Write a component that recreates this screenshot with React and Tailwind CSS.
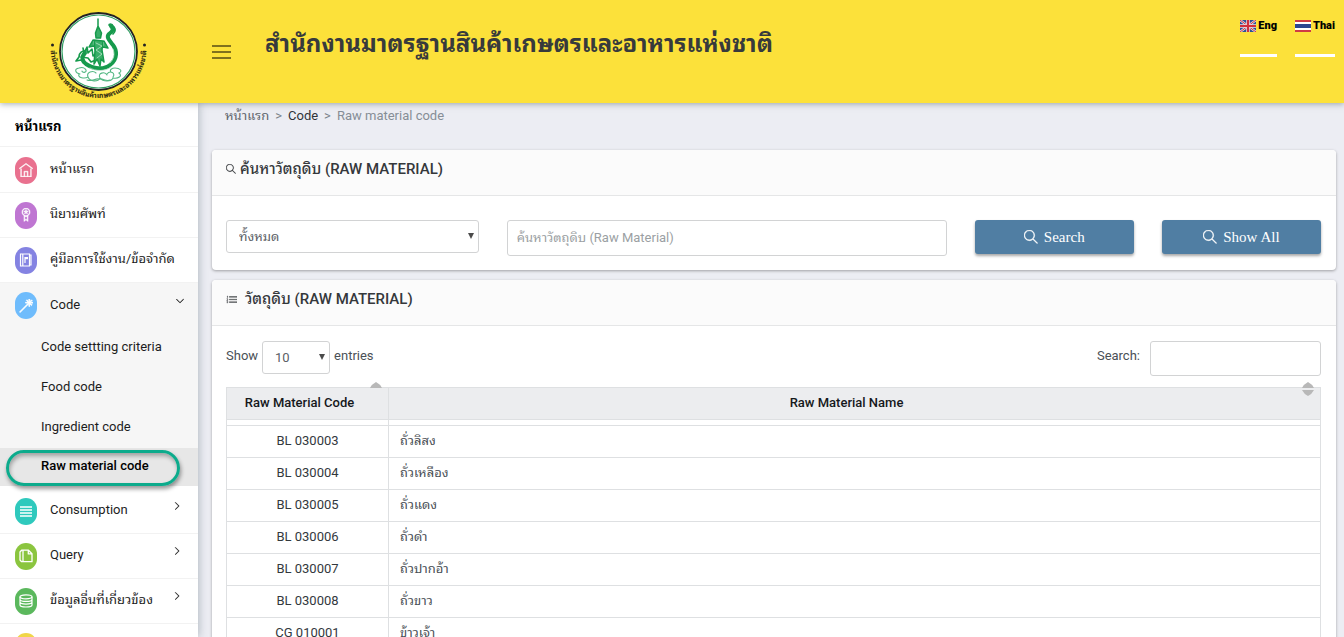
import React from "react";
import {
  TfiHome,
  TfiMedall,
  TfiWand,
  TfiAngleDown,
  TfiAngleRight,
  TfiSearch,
  TfiListOl,
} from "react-icons/tfi";

function DatabaseIcon() {
  return (
    <svg viewBox="0 0 14 14" className="size-[14px]" fill="none" stroke="currentColor" strokeWidth="1.2">
      <ellipse cx="7" cy="2.8" rx="6" ry="2" />
      <path d="M1 2.8v2.6c0 1.1 2.7 2 6 2s6-.9 6-2V2.8M1 5.4v2.7c0 1.1 2.7 2 6 2s6-.9 6-2V5.4M1 8.1v2.9c0 1.1 2.7 2 6 2s6-.9 6-2V8.1" />
    </svg>
  );
}

function LinesIcon() {
  return (
    <svg viewBox="0 0 14 14" className="size-[14px]" fill="none" stroke="currentColor" strokeWidth="1.6">
      <path d="M1 3h12M1 6h12M1 9h12M1 12h12" />
    </svg>
  );
}

function BookIcon() {
  return (
    <svg viewBox="0 0 14 14" className="size-[14px]" fill="none" stroke="currentColor" strokeWidth="1.2">
      <path d="M1.500 1h9v12h-9zM3.800 1v12M10.500 2h1.500v10h-1.500" />
      <path d="M6 4h3v2.200H6z" fill="currentColor" stroke="none" />
      <path d="M6 4v6" />
    </svg>
  );
}

function DocumentsIcon() {
  return (
    <svg viewBox="0 0 14 14" className="size-[14px]" fill="none" stroke="currentColor" strokeWidth="1.3">
      <path d="M4 1.200h5.500l3.500 3.500v8H4zM9.300 1.200v3.700H13M4 1.200H2.600L1 3v8l1.600 1.700H4" strokeLinejoin="round" />
    </svg>
  );
}

function Logo() {
  return (
    <svg viewBox="0 0 108 98" className="h-[98px] w-[108px]" role="img" aria-label="ตราสำนักงาน">
      <circle cx="53.5" cy="46.500" r="38.500" fill="#fff" stroke="#222" strokeWidth="1.800" />
      <circle cx="53.500" cy="46.500" r="36.500" fill="none" stroke="#2f9e62" strokeWidth="1.200" />
      <g fill="none" stroke="#169a4c" strokeLinecap="round" strokeLinejoin="round">
        <path d="M40 48c-4 4-3 8 1 11 7 5 18 6 24 1 8-6 7-15 3-20-4-5-7-8-4-11 4-3 5-5 2-8" strokeWidth="4" />
        <path d="M68 21c-1-3-4-2-4-1M69 22c2 3 1 5-1 7M42 46c-5-1-8 2-8 6l-3 4 5-1 4 3" strokeWidth="1.700" />
        <path d="M38 43l1 5 3-6 1 6 4-4 1 7 5-3M36 52l7 1 3 4 5-2" strokeWidth="1.600" />
        <path d="M53 14v9M50.500 28l2.500-7 3.500 7-1 5h-4.500zM49 35l9 1-1 9 2 12-3-3-1 7-3-7-3 5 1-13zM48 35l-4 7 5-1M59 36l4 7-5-1" strokeWidth="1.500" fill="#3aae69" />
        <path d="M51 38l6 3-6 4 6 4-5 4M45 63c5 3 15 4 21-1M68 44c2 5 1 10-3 14" stroke="#b9e4c9" strokeWidth=".8" />
      </g>
      <g fill="none" stroke="#54b883" strokeWidth="1.100" strokeLinecap="round">
        <path d="M35 69c-5-1-6-5-1-6 3-1 6 0 7 2 1 3-4 3-4 1M34 69c-2 4 6 5 9 3 2 5 10 5 12 1 3 4 11 4 13 0 5 1 10-2 6-5 4-2 1-5-4-5-3 0-6 2-4 4M43 72c-2-5 5-7 8-4M55 73c-3-5 5-7 7-3M68 72c3-4-3-7-6-3" />
        <path d="M42 75c5 2 8-2 12-1 4-1 7 3 11 1" />
      </g>
      <defs>
        <path id="seal-arc" d="M5.500 43A48 50 0 0 0 101.500 43" />
      </defs>
      <circle cx="7.500" cy="40" r="1.500" fill="#222" />
      <circle cx="99.500" cy="40" r="1.500" fill="#222" />
      <text fontSize="7" fontWeight="700" fill="#2b2710">
        <textPath href="#seal-arc" startOffset="50%" textAnchor="middle">
          สำนักงานมาตรฐานสินค้าเกษตรและอาหารแห่งชาติ
        </textPath>
      </text>
    </svg>
  );
}

function UkFlag() {
  return (
    <svg viewBox="0 0 16 12" className="h-3 w-4">
      <path fill="#2f4f93" d="M0 0h16v12H0z" />
      <path d="M0 0l16 12M16 0L0 12" stroke="#e3dfe6" strokeWidth="2.200" />
      <path d="M0 0l16 12M16 0L0 12" stroke="#d0303c" strokeWidth="1" />
      <path d="M8 0v12M0 6h16" stroke="#eee4e8" strokeWidth="3.600" />
      <path d="M8 0v12M0 6h16" stroke="#d0303c" strokeWidth="2.200" />
    </svg>
  );
}

function ThaiFlag() {
  return (
    <svg viewBox="0 0 16 12" className="h-3 w-4">
      <path fill="#cf3b45" d="M0 0h16v12H0z" />
      <path fill="#fff" d="M0 2h16v8H0z" />
      <path fill="#2b4590" d="M0 4h16v4H0z" />
    </svg>
  );
}

function LangLink({ flag, label }) {
  return (
    <a href="#" className="flex flex-col gap-[22px] text-[11px] leading-3 font-black text-black">
      <span className="flex items-center gap-[2px]">
        {flag}
        {label}
      </span>
      <span className="h-[3px] bg-white" />
    </a>
  );
}

function NavItem({ color, icon, label, arrow, open }) {
  return (
    <li className={open ? "" : "border-b border-[#f2f2f2]"}>
      <a href="#" className={`flex items-center pr-[14px] pl-[15px] text-[#1d1d1d] ${open ? "h-[45px]" : "h-11"}`}>
        <span className={`flex h-[27px] w-[22px] shrink-0 items-center justify-center rounded-full text-white ${color}`}>
          {icon}
        </span>
        <span className="ml-[13px] flex-1 pb-[2px] whitespace-nowrap">{label}</span>
        {arrow && <span className={`mb-[10px] text-[8px] ${open ? "" : "mr-[3px]"}`}>{arrow}</span>}
      </a>
    </li>
  );
}

const subItems = ["Code settting criteria", "Food code", "Ingredient code"];

const rows = [
  ["BL 030003", "ถั่วลิสง"],
  ["BL 030004", "ถั่วเหลือง"],
  ["BL 030005", "ถั่วแดง"],
  ["BL 030006", "ถั่วดำ"],
  ["BL 030007", "ถั่วปากอ้า"],
  ["BL 030008", "ถั่วขาว"],
  ["CG 010001", "ข้าวเจ้า"],
];

function Sidebar() {
  return (
    <nav className="z-10 w-[198px] shrink-0 bg-white shadow-[1px_0_8px_rgba(69,90,100,0.35)]">
      <h2 className="flex h-11 items-center border-b border-[#f2f2f2] pt-1 pl-[15px] text-[13px] font-bold text-black">หน้าแรก</h2>
      <ul className="pt-px">
        <NavItem color="bg-[#e9718f]" icon={<TfiHome className="size-[14px] stroke-current stroke-[0.5]" />} label="หน้าแรก" />
        <NavItem color="bg-[#bf76d2]" icon={<TfiMedall className="size-[14px] stroke-current stroke-[0.5]" />} label="นิยามศัพท์" />
        <NavItem color="bg-[#8483e2]" icon={<BookIcon />} label="คู่มือการใช้งาน/ข้อจำกัด" />
        <li className="mb-[3px] bg-[#f6f6f6]">
          <ul>
            <NavItem
              open
              color="bg-[#6fbcfc]"
              icon={<TfiWand className="size-[14px] stroke-current stroke-1" />}
              label="Code"
              arrow={<TfiAngleDown className="stroke-current stroke-1" />}
            />
            {subItems.map((item) => (
              <li key={item}>
                <a href="#" className="flex h-10 items-center pb-[2px] pl-[41px] text-[#1d1d1d]">{item}</a>
              </li>
            ))}
            <li className="relative bg-[#e7e7e7]">
              <a href="#" className="flex h-[38px] items-center pb-[2px] pl-[41px] font-medium text-black">Raw material code</a>
              <span className="absolute inset-y-0 right-[18px] left-[6px] mt-[2px] rounded-full border-3 border-[#0dab8c] shadow-[1px_3px_4px_rgba(0,0,0,0.4),inset_1px_3px_4px_rgba(0,0,0,0.3)]" />
            </li>
          </ul>
        </li>
        <NavItem color="bg-[#2fc9bd]" icon={<LinesIcon />} label="Consumption" arrow={<TfiAngleRight className="stroke-current stroke-1" />} />
        <NavItem color="bg-[#8bc53f]" icon={<DocumentsIcon />} label="Query" arrow={<TfiAngleRight className="stroke-current stroke-1" />} />
        <NavItem color="bg-[#5bb85d]" icon={<DatabaseIcon />} label="ข้อมูลอื่นที่เกี่ยวข้อง" arrow={<TfiAngleRight className="stroke-current stroke-1" />} />
        <NavItem color="bg-[#f0d648]" label="" />
      </ul>
    </nav>
  );
}

function Card({ title, icon, children, className }) {
  return (
    <section className={`rounded bg-white shadow-[0_1px_3px_rgba(43,43,43,0.4)] ${className}`}>
      <h3 className="flex h-[46px] items-start rounded-t border-b border-[#e5e6e7] bg-[#fbfbfb] px-[14px] pt-[7px] text-[15px] leading-6 font-medium text-[#35383b]">
        <span className="flex h-6 items-center">{icon}</span>
        {title}
      </h3>
      {children}
    </section>
  );
}

function SelectBox({ id, label, value, className }) {
  return (
    <span className={`relative inline-block ${className}`}>
      <select id={id} aria-label={label} className="h-[33px] w-full appearance-none rounded-[3px] border border-[#d2d3d4] bg-white px-3 text-[#5b6066]">
        <option>{value}</option>
      </select>
      <svg viewBox="0 0 6 6" className="pointer-events-none absolute top-[13px] right-[5px] size-[6px]" fill="#4b4b4b">
        <path d="M0 0h6L3 6z" />
      </svg>
    </span>
  );
}

function ActionButton({ children }) {
  return (
    <button className="flex h-[34px] w-full items-center justify-center gap-[6px] rounded-[3px] bg-[#507ea3] font-['Liberation_Serif',serif] text-[15px] text-white shadow-[0_2px_3px_rgba(0,0,0,0.35)]">
      <TfiSearch className="size-[14px] stroke-current stroke-[0.5]" />
      {children}
    </button>
  );
}

export default function App() {
  return (
    <div className="flex h-screen flex-col overflow-hidden bg-[#ecedf3] font-[Roboto,'Noto_Sans_Thai_Looped',Loma,'Noto_Sans_Thai',sans-serif] text-[13px] leading-5 text-[#4a5056]">
      <header className="z-20 flex h-[103px] shrink-0 items-start bg-[#fce13a] shadow-[0_1px_6px_rgba(69,90,100,0.5)]">
        <div className="w-[198px] shrink-0 pt-[5px] pl-[45px]">
          <Logo />
        </div>
        <button aria-label="Menu" className="mt-[45px] ml-[14px] flex w-[19px] flex-col gap-1">
          <span className="h-[2px] bg-[#80711d]" />
          <span className="h-[2px] bg-[#80711d]" />
          <span className="h-[2px] bg-[#80711d]" />
        </button>
        <h1 className="mt-6 ml-[34px] text-[24px] leading-10 font-bold whitespace-nowrap text-[#373a3c]">
          สำนักงานมาตรฐานสินค้าเกษตรและอาหารแห่งชาติ
        </h1>
        <div className="mt-5 mr-[9px] ml-auto flex gap-[18px]">
          <LangLink flag={<UkFlag />} label="Eng" />
          <LangLink flag={<ThaiFlag />} label="Thai" />
        </div>
      </header>
      <div className="flex min-h-0 flex-1">
        <Sidebar />
        <main className="min-w-0 flex-1 pr-2 pl-[14px]">
          <div className="flex h-[47px] gap-[6px] pt-[3px] pl-[13px]">
            <a href="#" className="text-[#5f666d]">หน้าแรก</a>
            <span className="text-[#7b838a]">&gt;</span>
            <a href="#" className="text-[#303439]">Code</a>
            <span className="text-[#7b838a]">&gt;</span>
            <span className="text-[#868e96]">Raw material code</span>
          </div>
          <Card
            title="ค้นหาวัตถุดิบ (RAW MATERIAL)"
            icon={<TfiSearch className="mr-1 size-[10px] stroke-current stroke-[0.5]" />}
            className="mb-[10px]"
          >
            <div className="grid grid-cols-12 pt-6 pr-px pb-[14px] *:px-[14px]">
              <div className="col-span-3"><SelectBox id="kind" label="ประเภท" value="ทั้งหมด" className="w-full" /></div>
              <div className="col-span-5">
                <input aria-label="ค้นหาวัตถุดิบ" placeholder="ค้นหาวัตถุดิบ (Raw Material)" className="h-9 w-full rounded-[3px] border border-[#d2d3d4] px-[9px] pb-[2px] placeholder:text-[#9b9fa3]" />
              </div>
              <div className="col-span-2"><ActionButton>Search</ActionButton></div>
              <div className="col-span-2"><ActionButton>Show All</ActionButton></div>
            </div>
          </Card>
          <Card title="วัตถุดิบ (RAW MATERIAL)" icon={<TfiListOl className="mr-2 size-[11px] stroke-current stroke-[0.5]" />}>
            <div className="pt-[15px] pr-[15px] pl-[14px]">
              <div className="flex h-[46px] items-start justify-between">
                <div className="flex items-start gap-1">
                  <label htmlFor="length" className="pt-[5px]">Show</label>
                  <SelectBox id="length" label="Show entries" value="10" className="w-[68px]" />
                  <span className="pt-[5px]">entries</span>
                </div>
                <label className="flex items-start gap-[10px]">
                  <span className="pt-[5px]">Search:</span>
                  <input type="search" className="h-[35px] w-[171px] rounded-[3px] border border-[#d2d3d4]" />
                </label>
              </div>
              <table className="w-full border-collapse *:*:*:border *:*:*:border-[#dee0e2]">
                <thead className="bg-[#ecedef] text-[#15181b]">
                  <tr className="h-8">
                    <th className="relative w-[162px] pr-4 pb-[2px] font-medium">
                      Raw Material Code
                      <svg viewBox="0 0 12 6" className="absolute -top-[6px] right-[6px] h-[6px] w-3" fill="#b8b8b8">
                        <path d="M0 6Q2 2 6 0Q10 2 12 6z" />
                      </svg>
                    </th>
                    <th className="relative pr-4 pb-[2px] font-medium">
                      Raw Material Name
                      <svg viewBox="0 0 12 14" className="absolute -top-[6px] right-[6px] h-[14px] w-3" fill="#b8b8b8">
                        <path d="M0 6Q2 2 6 0Q10 2 12 6zM0 8h12Q10 12 6 14Q2 12 0 8z" />
                      </svg>
                    </th>
                  </tr>
                </thead>
                <tbody>
                  <tr className="h-[6px]"><td /><td /></tr>
                  {rows.map(([code, name]) => (
                    <tr key={code} className="h-8">
                      <td className="pb-[2px] text-center text-[#33383d]">{code}</td>
                      <td className="px-[11px] pb-[2px]">{name}</td>
                    </tr>
                  ))}
                </tbody>
              </table>
            </div>
          </Card>
        </main>
      </div>
    </div>
  );
}
